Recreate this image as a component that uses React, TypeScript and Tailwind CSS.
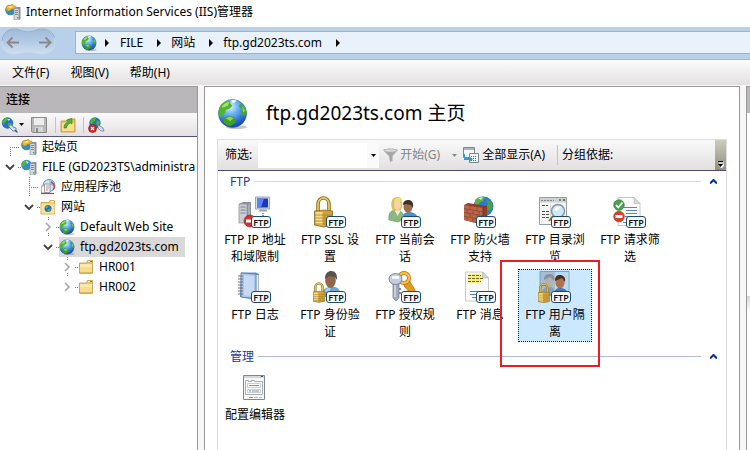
import React, { useId, useState } from "react";
import type { ReactNode } from "react";

/* ---------- shared drawings ---------- */

function Globe({ className = "size-4" }: { className?: string }) {
  const id = useId();
  return (
    <svg viewBox="0 0 32 32" className={`shrink-0 ${className}`} aria-hidden="true">
      <defs>
        <radialGradient id={id} cx="0.42" cy="0.25" r="0.8">
          <stop offset="0" stopColor="#e2f6ff" />
          <stop offset="0.3" stopColor="#78bdf5" />
          <stop offset="0.7" stopColor="#2a6fd6" />
          <stop offset="1" stopColor="#123c98" />
        </radialGradient>
      </defs>
      <ellipse cx="20" cy="30" rx="11" ry="2" fill="#000" opacity="0.22" />
      <circle cx="16" cy="16" r="14.5" fill={`url(#${id})`} stroke="#2a5dac" strokeWidth="0.6" />
      <path d="M3 9C6 4 10 3 13 3l1 3 2 2-3 3-4 1-1 4-3 2-1 3-2-3c-1-3 0-6 1-9z" fill="#4fb52c" />
      <path d="M5 9c2-3 5-5 8-5l-2 4-5 2z" fill="#a5e266" />
      <path d="M24 6c3 1 6 5 6.400 9l-2 4-3-2-1-3 1-3-3-2z" fill="#46a82b" />
      <path d="M26 8l3 5-2 2z" fill="#8fd955" />
      <path d="M7 21l5-3 5 2 3 4-2 2-4 3-4-1-3-3z" fill="#3fa028" />
      <path d="M9 21l4-2 4 2-3 3z" fill="#8ad94e" />
      <path d="M15 2h5l-2 3h-3z" fill="#e9fbff" />
    </svg>
  );
}

function ServerIcon({ sun = false }: { sun?: boolean }) {
  return (
    <svg viewBox="0 0 16 16" className="size-4 shrink-0" aria-hidden="true">
      <circle cx="5.500" cy="6" r="5.300" fill="#2f86dc" />
      <path d="M1 5c1-3 3-4 5-4l1 2-2 2-1 2-2 1z" fill="#55b336" />
      <path d="M4 8l3 0 0 3-3-1z" fill="#47a62f" />
      <path d="M5 2l3 1-2 2z" fill="#c5ecff" />
      {sun && (
        <>
          <path d="M1 3l2-2 2 1 2-2 2 2 2 0-1 3-3 0-3 2-2-1z" fill="#f4b42b" stroke="#cf8b12" strokeWidth="0.5" />
          <path d="M3 3l3-1 2 1-3 1z" fill="#fff0a0" />
        </>
      )}
      <path d="M9 4.500l2-1.500h4.500v12l-1.500 1H9z" fill="#8c949b" />
      <path d="M9 4.500h5V16H9z" fill="#d5dadd" stroke="#7d868d" strokeWidth="0.6" />
      <path d="M10 6.500h3M10 8.500h3M10 10.500h3" stroke="#66717a" strokeWidth="0.8" />
      <path d="M12 13h1.500v1.500H12z" fill="#38c02e" />
    </svg>
  );
}

function PoolIcon() {
  return (
    <svg viewBox="0 0 16 16" className="size-4 shrink-0" aria-hidden="true">
      <circle cx="9" cy="6.500" r="6" fill="#cfe6f6" stroke="#5b93c4" />
      <path d="M9 1c3 0 5 2 5.500 5l-2.500 1-2-2z" fill="#8fc4e8" />
      <path d="M11 3a5 5 0 0 1 2 8" fill="none" stroke="#d0463c" strokeWidth="1.500" />
      <path d="M1.500 7h5v7h-5z" fill="#fff" stroke="#8a98a8" strokeWidth="0.8" />
      <path d="M4.500 5h5.500v8.500H4.500z" fill="#f8fafc" stroke="#7b8999" strokeWidth="0.8" />
      <path d="M6 7h3M6 9h3M6 11h2" stroke="#e0635a" strokeWidth="0.8" />
      <path d="M1 14.500h13" stroke="#c23a30" strokeWidth="1.200" />
    </svg>
  );
}

function SitesIcon() {
  return (
    <svg viewBox="0 0 16 16" className="size-4 shrink-0" aria-hidden="true">
      <path d="M1 3.500h8l1-2h4.500V15H1z" fill="#f4cf72" stroke="#c79a3c" strokeWidth="0.8" />
      <path d="M1.500 5h13v9.500h-13z" fill="#fbe29c" />
      <path d="M11 2.500h3" stroke="#fff" />
      <circle cx="8" cy="9.500" r="3.500" fill="#2a70c2" />
      <path d="M5 8.500l2-2 1.500 1-1.500 2z M8 10l2.500 0-1 2.500-2 0z" fill="#52b83a" />
    </svg>
  );
}

function FolderIcon() {
  return (
    <svg viewBox="0 0 16 16" className="size-4 shrink-0" aria-hidden="true">
      <path d="M1.500 4h7l1-2.500h5V14h-13z" fill="#ecc164" stroke="#c39a48" strokeWidth="0.8" />
      <path d="M10 2.500h4" stroke="#fff" />
      <path d="M12 2.500h2" stroke="#3c86d8" />
      <path d="M2 5h12v8.500H2z" fill="#f9dc8f" />
      <path d="M2 5h12v3H2z" fill="#fde9ae" />
      <path d="M1.500 14.200h13" stroke="#b78b36" strokeWidth="0.8" />
    </svg>
  );
}

/* ---------- feature icons (32 x 32) ---------- */

function Svg32({ children }: { children: ReactNode }) {
  return (
    <svg viewBox="0 0 32 32" className="size-8" aria-hidden="true">
      {children}
    </svg>
  );
}

function Padlock({ x = 0, y = 0, s = 1 }: { x?: number; y?: number; s?: number }) {
  return (
    <g transform={`translate(${x} ${y}) scale(${s})`}>
      <path d="M5 16V8a5.500 6 0 0 1 11 0v8" fill="none" stroke="#8d6b1c" strokeWidth="3.600" />
      <path d="M5 16V8a5.500 6 0 0 1 11 0v8" fill="none" stroke="#ebc75f" strokeWidth="1.800" />
      <path d="M1.500 15l10-1 8 1v14l-9 2-9-2z" fill="#d0a03a" stroke="#8d6b1c" strokeWidth="0.8" />
      <path d="M2.500 16h7v13.500l-7-1.500z" fill="#f5dc8b" />
      <path d="M2 19h17M2 22h17M2 25h17M2 28h17" stroke="#a87d22" strokeWidth="0.8" />
    </g>
  );
}

const IpIcon = () => (
  <Svg32>
    <path d="M1 8l4-2h8v19l-3 2H1z" fill="#8b9299" />
    <path d="M1 8h8v19H1z" fill="#c9ced3" stroke="#858d95" strokeWidth="0.7" />
    <path d="M2.500 11h5M2.500 14h5M2.500 17h5" stroke="#7b848d" />
    <path d="M11 8v16" stroke="#c0c6cc" />
    <path d="M17.500 1h14v12h-14z" fill="#d8dde6" stroke="#8b95a5" strokeWidth="0.8" />
    <path d="M19 2.500h11v9H19z" fill="#1b35c4" />
    <path d="M19 2.500h7l-3 9h-4z" fill="#5c83ee" />
    <path d="M22 13.500h6l2 2H20z" fill="#9aa3b0" />
    <path d="M25 17v4" stroke="#222" strokeDasharray="1 1" />
    <circle cx="12" cy="25" r="6" fill="#d3312b" stroke="#941a17" strokeWidth="0.6" />
    <path d="M8 23.500h8v3H8z" fill="#fff" />
  </Svg32>
);

const SslIcon = () => (
  <Svg32>
    <Padlock />
  </Svg32>
);

const SessionsIcon = () => (
  <Svg32>
    <path d="M14 24c0-6 3-8 7-8s9 2 9 8z" fill="#4b8fd0" />
    <ellipse cx="20" cy="11" rx="4.500" ry="5.500" fill="#a06a46" />
    <path d="M15 9c0-4 3-5 5.500-5S26 6 25 12l-2-3-5-1z" fill="#3a2f2a" />
    <path d="M1 24c-1-7 2-10 7-10s8 3 8 9l-6 3z" fill="#8ab885" stroke="#5f9460" strokeWidth="0.6" />
    <path d="M4 13C2 6 4 1 9 1s6 4 5 10l-2 4H6z" fill="#dcc158" />
    <ellipse cx="9.500" cy="9" rx="3.400" ry="5" fill="#f5d2ac" />
    <path d="M6 7c0-4 2-5 4-5s4 1 4 4l-4-1z" fill="#efdc84" />
    <path d="M7 15l2.500 5 3-5-2-1z" fill="#fbe6cf" />
  </Svg32>
);

const FirewallIcon = () => (
  <Svg32>
    <circle cx="20.500" cy="10.500" r="10" fill="#2f78d8" />
    <path d="M12 4c3-4 8-4 10-3l-2 4-3 1-2 4-3-1z" fill="#57b63a" />
    <path d="M23 3l5 3 2 6-4 3-3-4 2-3z" fill="#49a632" />
    <path d="M15 2l5-1-2 3z" fill="#c6ecff" />
    <path d="M1 9l4-2 19 3v17l-4 2-19-5z" fill="#8e3f2c" />
    <path d="M1 9l19 3v16L1 24z" fill="#bd6549" />
    <path d="M1 12.700l19 3.200M1 16.500l19 3.200M1 20.200l19 3.800M7 10v4M14 11v4M4 13.500v3.500M10 14.500v3.500M16 15.500v3.500M7 18v3M14 19v4M4 21v3M10 22v4" stroke="#8b4634" strokeWidth="0.8" fill="none" />
    <path d="M20 12l4-2M20 12v16" stroke="#6a2c1c" strokeWidth="0.8" />
  </Svg32>
);

const BrowseIcon = () => (
  <Svg32>
    <path d="M1.500 1.500h27v27h-27z" fill="#f6f6f4" stroke="#999d9f" />
    <path d="M2 2h26v4.500H2z" fill="#cfd2d2" />
    <path d="M3 4.500h13" stroke="#7c8284" strokeDasharray="2 1" />
    <path d="M21 3h2v2h-2z" fill="#5f9f3f" />
    <path d="M25 3h2v2h-2z" fill="#6b7173" />
    <path d="M4 9.500h6M4 15.500h7M4 18.500h7M4 21.500h7" stroke="#4b5052" strokeDasharray="3 1" />
    <path d="M12.500 8v17" stroke="#d5d8d9" />
    <circle cx="20" cy="15" r="6.500" fill="#cfe8f8" stroke="#8798a5" strokeWidth="1.500" />
    <path d="M16 14c1-3 4-4 7-3l-4 4z" fill="#fff" />
    <path d="M15 20l-4 5" stroke="#a0703e" strokeWidth="2" />
  </Svg32>
);

const RequestIcon = () => (
  <Svg32>
    <path d="M5 1.500h16l6 6v22H5z" fill="#fbfbfb" stroke="#b4b8bc" strokeWidth="0.8" />
    <path d="M21 1.500v6h6z" fill="#d6dadd" stroke="#b4b8bc" strokeWidth="0.6" />
    <path d="M11 11.500h13M13 14.500h11M13 17.500h11M12 20.500h12M10 26.500h4" stroke="#5489c4" />
    <circle cx="6" cy="9" r="5.300" fill="#45a14a" stroke="#277330" strokeWidth="0.6" />
    <path d="M3 9l2.300 2.500L9.500 6.500" fill="none" stroke="#fff" strokeWidth="1.800" />
    <circle cx="6" cy="20.500" r="5.300" fill="#dc4128" stroke="#9c2413" strokeWidth="0.6" />
    <path d="M2.500 19h7v3h-7z" fill="#fff" />
  </Svg32>
);

const LogIcon = () => (
  <Svg32>
    <path d="M3 1.500h15l3 1.500v24l-3 2-16-3z" fill="#6a8cba" />
    <path d="M3 2l15 1v25L3 26z" fill="#a9c6e8" stroke="#5577a6" strokeWidth="0.8" />
    <path d="M6 4l10 1v21L6 24z" fill="#c6dbf3" />
    <path d="M18.500 4l2 0v23l-2 1z" fill="#e7edf4" />
    <path d="M0 5h5M0 8h5M0 11h5M0 14h5M0 17h5M0 20h5M0 23h5" stroke="#66717e" strokeWidth="1.200" />
  </Svg32>
);

const AuthIcon = () => (
  <Svg32>
    <path d="M8 26c0-7 4-9 8-10h6c4 1 6 4 6 10z" fill="#6fa5d6" />
    <path d="M12 20c1-3 4-4 6-4l-2 6z" fill="#a9cdec" />
    <ellipse cx="17.500" cy="9.500" rx="5.300" ry="7.500" fill="#926649" />
    <path d="M12 8c0-6 3-8 6.500-8s6 3 5.500 9l-2-3-6-1z" fill="#55544f" />
    <Padlock x={-1} y={11} s={0.66} />
  </Svg32>
);

const KeysIcon = () => (
  <Svg32>
    <path d="M17 12l4-3 6 10 0 5-4-1-7-8z" fill="#e39a1c" stroke="#a76a0d" strokeWidth="0.7" />
    <circle cx="16" cy="7" r="5" fill="none" stroke="#b9770f" strokeWidth="4" />
    <circle cx="16" cy="7" r="5" fill="none" stroke="#f5be49" strokeWidth="2.400" />
    <path d="M5 12h6v15l-3 3-3-3z" fill="#a4adbf" stroke="#6b7488" strokeWidth="0.7" />
    <path d="M11 17h2v2h-2zM11 21h2v2h-2z" fill="#7a849a" />
    <ellipse cx="7.500" cy="8" rx="6.500" ry="5.500" fill="#c6cddb" stroke="#6b7488" strokeWidth="0.8" />
    <path d="M4 6.500h7" stroke="#fff" strokeWidth="2.500" />
    <path d="M7 14v12" stroke="#eef1f6" />
  </Svg32>
);

const MessageIcon = () => (
  <Svg32>
    <path d="M2.500 1h17l6 6v23h-23z" fill="#fafafa" stroke="#c3c6c9" strokeWidth="0.9" />
    <path d="M19.500 1v6h6z" fill="#d3d7da" stroke="#a5a9ad" strokeWidth="0.6" />
    <path d="M5 3h13v9H5z" fill="#f6ec86" />
    <path d="M5 4.500h13M5 7.500h16M5 10.500h13" stroke="#6b662c" strokeDasharray="3 1" />
    <path d="M7 20.500h8M7 23.500h6M9 26.500h4" stroke="#4f80c0" />
  </Svg32>
);

const IsolationIcon = () => (
  <Svg32>
    <path d="M2 0.500h29v24H2z" fill="#a7bed2" stroke="#6d93b7" strokeWidth="0.8" />
    <path d="M17 1h13.500v23H17z" fill="#b7dbf6" />
    <path d="M4 24c0-7 3-8 7-8s6 1 6 8z" fill="#86a3bb" />
    <ellipse cx="11" cy="10.500" rx="4.500" ry="6" fill="#b3b2ad" />
    <path d="M6 9c0-4 2-6 5.500-6S17 5 16 10l-4-4z" fill="#87929b" />
    <path d="M16 24c0-6 3-7 6-7s8 1 8 7z" fill="#3f78b4" />
    <ellipse cx="22" cy="11.500" rx="4.500" ry="6" fill="#b0724b" />
    <path d="M17 10c0-5 2-6 5-6s6 2 5 7l-3-4z" fill="#4b2f22" />
    <Padlock x={-1} y={12} s={0.64} />
  </Svg32>
);

const ConfigIcon = () => (
  <Svg32>
    <path d="M5.500 4.500h21v24h-21z" fill="#f4f6f7" stroke="#7e868c" />
    <path d="M6 5h20v2H6z" fill="#d3d7da" />
    <path d="M23 5h2v1h-2z" fill="#38516b" />
    <path d="M7.500 23.500v-14h3v1h3v-1h3v1h8v13z" fill="#fff" stroke="#a8adb2" />
    <path d="M9.500 12.500h13v4h-13zM9.500 18.500h13v3h-13z" fill="#fff" stroke="#c9cdd0" />
    <path d="M11 14.500h10M14 20h7" stroke="#8a9095" />
    <path d="M11 20h2M11 26.500h4" stroke="#22b4ee" strokeWidth="1.200" />
    <path d="M16 26.500h4M21 26.500h3" stroke="#b5babd" />
  </Svg32>
);

/* ---------- connections tree ---------- */

type Twist = "none" | "open" | "closed";

function Lead({ twist, up, down }: { twist: Twist; up: boolean; down: boolean }) {
  return (
    <svg viewBox="0 0 21 20" className="h-5 w-[21px] shrink-0" fill="none" aria-hidden="true">
      <g stroke="#808080" strokeDasharray="1 1">
        {up && <path d={twist === "none" ? "M10.500 0v10" : "M10.500 0v4"} />}
        {down && <path d={twist === "none" ? "M10.500 10v10" : "M10.500 16v4"} />}
        <path d={twist === "none" ? "M10 10.500h10" : "M18 10.500h3"} />
      </g>
      {twist === "open" && <path d="M6 8l4 4 4-4" stroke="#404040" strokeWidth="1.800" />}
      {twist === "closed" && <path d="M8 6l4 4-4 4" stroke="#a6a6a6" strokeWidth="1.600" />}
    </svg>
  );
}

interface Node {
  label: string;
  indent: string;
  twist: Twist;
  up: boolean;
  down: boolean;
  icon: ReactNode;
}

const nodes: Node[] = [
  { label: "起始页", indent: "pl-0", twist: "none", up: false, down: true, icon: <ServerIcon sun /> },
  { label: "FILE (GD2023TS\\administra", indent: "pl-0", twist: "open", up: false, down: false, icon: <ServerIcon /> },
  { label: "应用程序池", indent: "pl-[19px]", twist: "none", up: true, down: true, icon: <PoolIcon /> },
  { label: "网站", indent: "pl-[19px]", twist: "open", up: false, down: false, icon: <SitesIcon /> },
  { label: "Default Web Site", indent: "pl-[38px]", twist: "closed", up: true, down: true, icon: <Globe /> },
  { label: "ftp.gd2023ts.com", indent: "pl-[38px]", twist: "open", up: false, down: false, icon: <Globe /> },
  { label: "HR001", indent: "pl-[57px]", twist: "closed", up: true, down: true, icon: <FolderIcon /> },
  { label: "HR002", indent: "pl-[57px]", twist: "closed", up: false, down: false, icon: <FolderIcon /> },
];

function Connections() {
  const [current, setCurrent] = useState("ftp.gd2023ts.com");
  return (
    <aside className="flex w-[198px] shrink-0 flex-col overflow-hidden border-t border-r border-[#989898] bg-white">
      <h2 className="flex h-[26px] shrink-0 items-center bg-[#bab7ba] px-1.5 font-medium">连接</h2>
      <div className="flex h-6 shrink-0 items-center border-b border-[#56527a] bg-gradient-to-b from-[#fbfafa] to-[#e3e0e2]">
        <button type="button" aria-label="连接" className="flex items-center gap-px pl-px">
          <svg viewBox="0 0 17 16" className="h-4 w-[17px]" aria-hidden="true">
            <circle cx="6.500" cy="6" r="5.700" fill="#286fc6" />
            <path d="M1 5c1-3 3-5 6-4l-1 3-2 1-1 3z M7 6l4 0-1 4-3-1z" fill="#4eb234" />
            <path d="M6 2l3 0-1 2z" fill="#d0f0ff" />
            <path d="M8 8l3 0 1 2 3 1 0 3-3 0-4-4z" fill="#d3dde9" stroke="#5c7796" strokeWidth="0.8" />
            <path d="M14 13l2.500 2.500" stroke="#40566f" strokeWidth="1.200" />
          </svg>
          <svg viewBox="0 0 5 3" className="h-[3px] w-[5px]" aria-hidden="true"><path d="M0 0h5L2.500 3z" /></svg>
        </button>
        <button type="button" aria-label="保存" disabled className="ml-1.5">
          <svg viewBox="0 0 18 16" className="h-4 w-[18px]" aria-hidden="true">
            <path d="M1.500.500h15v15h-14l-1-1z" fill="#b7b7b7" stroke="#8b8b8b" />
            <path d="M4 1h10v7H4z" fill="#ededed" />
            <path d="M5 10h8v5H5z" fill="#d6d6d6" />
            <path d="M6 11h2v4H6z" fill="#8a8a8a" />
          </svg>
        </button>
        <span className="mr-1 ml-[7px] h-4 w-px bg-[#c5c3b2]" />
        <button type="button" aria-label="向上">
          <svg viewBox="0 0 16 16" className="size-4" aria-hidden="true">
            <path d="M1 4h7l1-2h6v13H1z" fill="#eec466" stroke="#bb8f37" strokeWidth="0.8" />
            <path d="M2 6h12v8H2z" fill="#fbdf91" />
            <path d="M4 11c0-4 2-5 4-6L6.500 3 12 1.500 12 7l-1.500-1C8 7 7 8 6.500 11z" fill="#51b82d" stroke="#2d7d17" strokeWidth="0.6" />
          </svg>
        </button>
        <span className="mr-1 ml-[7px] h-4 w-px bg-[#c5c3b2]" />
        <button type="button" aria-label="断开连接">
          <svg viewBox="0 0 17 16" className="h-4 w-[17px]" aria-hidden="true">
            <circle cx="7" cy="6" r="5.700" fill="#286fc6" />
            <path d="M2 5c1-3 3-5 6-4l-1 3-2 1-1 3z M9 3l3 2-1 4-3-2z" fill="#4eb234" />
            <path d="M10 8l2 1 3 2 1 3-3 0-3-3z" fill="#d3dde9" stroke="#5c7796" strokeWidth="0.7" />
            <circle cx="4.500" cy="11.500" r="4" fill="#d2282a" stroke="#8f1416" strokeWidth="0.6" />
            <path d="M3 10l3 3M6 10l-3 3" stroke="#fff" strokeWidth="1.300" />
          </svg>
        </button>
      </div>
      <ul role="tree" className="flex-1">
        {nodes.map((n) => (
          <li key={n.label} role="treeitem" aria-selected={n.label === current}>
            <button
              type="button"
              onClick={() => setCurrent(n.label)}
              className={`flex h-5 w-full items-center text-left whitespace-nowrap ${n.indent}`}
            >
              <Lead twist={n.twist} up={n.up} down={n.down} />
              <span className={`flex h-5 items-center gap-[5px] pr-1.5 ${n.label === current ? "bg-[#d9d9d9]" : ""}`}>
                {n.icon}
                <span>{n.label}</span>
              </span>
            </button>
          </li>
        ))}
      </ul>
    </aside>
  );
}

/* ---------- feature view ---------- */

interface Feature {
  label: string;
  icon: ReactNode;
  ftp: boolean;
}

const ftpFeatures: Feature[] = [
  { label: "FTP IP 地址和域限制", icon: <IpIcon />, ftp: true },
  { label: "FTP SSL 设置", icon: <SslIcon />, ftp: true },
  { label: "FTP 当前会话", icon: <SessionsIcon />, ftp: true },
  { label: "FTP 防火墙支持", icon: <FirewallIcon />, ftp: true },
  { label: "FTP 目录浏览", icon: <BrowseIcon />, ftp: true },
  { label: "FTP 请求筛选", icon: <RequestIcon />, ftp: true },
  { label: "FTP 日志", icon: <LogIcon />, ftp: true },
  { label: "FTP 身份验证", icon: <AuthIcon />, ftp: true },
  { label: "FTP 授权规则", icon: <KeysIcon />, ftp: true },
  { label: "FTP 消息", icon: <MessageIcon />, ftp: true },
  { label: "FTP 用户隔离", icon: <IsolationIcon />, ftp: true },
];

const adminFeatures: Feature[] = [{ label: "配置编辑器", icon: <ConfigIcon />, ftp: false }];

const highlighted = "FTP 用户隔离";

function FeatureCell({ feature }: { feature: Feature }) {
  const active = feature.label === highlighted;
  return (
    <li className="relative h-[75px] w-[75px] pr-px pb-0.5">
      <button
        type="button"
        className={`flex h-full w-full flex-col items-center border px-[3px] pt-px leading-[17px] ${
          active ? "border-dotted border-[#222] bg-[#cce8ff]" : "border-transparent"
        }`}
      >
        <span className="relative mr-0.5 mb-[3px] block size-8 shrink-0">
          {feature.icon}
          {feature.ftp && (
            <span className="absolute top-5 left-[13px] flex h-3 w-5 items-center justify-center rounded-[3px] border border-[#1f4b6b] bg-[#f6fbfe] text-[9px] leading-none font-semibold text-[#111]">
              FTP
            </span>
          )}
        </span>
        <span className="w-full text-center">{feature.label}</span>
      </button>
      {active && (
        <span className="pointer-events-none absolute -top-[9px] -left-[18px] z-10 h-[107px] w-[100px] border-2 border-[#ed1c24]" />
      )}
    </li>
  );
}

function Group({ title, line, items }: { title: string; line: string; items: Feature[] }) {
  return (
    <section>
      <h3 className="flex h-[23px] items-center pr-[9px] pb-0.5 pl-3 text-[#1a3a9c]">
        <span>{title}</span>
        <span className={`mx-1 h-px flex-1 ${line}`} />
        <button type="button" aria-label={`折叠 ${title}`} className="ml-[5px]">
          <svg viewBox="0 0 7 5" className="h-[5px] w-[7px]" fill="none" stroke="#002f9c" strokeWidth="2" aria-hidden="true">
            <path d="M0 4.500l3.500-3.500L7 4.500" />
          </svg>
        </button>
      </h3>
      <ul className="flex flex-wrap">
        {items.map((f) => (
          <FeatureCell key={f.label} feature={f} />
        ))}
      </ul>
    </section>
  );
}

function FilterBar() {
  return (
    <div className="flex h-[31px] shrink-0 items-center border-b border-[#4d4a72] bg-gradient-to-b from-[#fafafa] to-[#e2dfe1] pl-[7px]">
      <label htmlFor="filter">筛选:</label>
      <div className="ml-1.5 flex h-[25px] w-[121px] bg-white">
        <input id="filter" type="text" className="w-0 flex-1 px-1 outline-none" />
        <button type="button" aria-label="筛选历史" className="flex w-3 items-center justify-center bg-[#fafafa]">
          <svg viewBox="0 0 5 3" className="h-[3px] w-[5px]" aria-hidden="true"><path d="M0 0h5L2.500 3z" /></svg>
        </button>
      </div>
      <button type="button" className="ml-1 flex items-center gap-0.5 text-[#838383]">
        <svg viewBox="0 0 15 14" className="h-[14px] w-[15px]" aria-hidden="true">
          <path d="M0 2c4-2 11-2 15 0L9.500 8v5L7 14 6 8z" fill="#a7a7a7" />
          <ellipse cx="7.500" cy="2.500" rx="6" ry="1.300" fill="#d7d7d7" />
        </svg>
        开始(G)
      </button>
      <button type="button" aria-label="开始选项" className="ml-3">
        <svg viewBox="0 0 5 3" className="h-[3px] w-[5px]" fill="#8a8a8a" aria-hidden="true"><path d="M0 0h5L2.500 3z" /></svg>
      </button>
      <button type="button" className="ml-1.5 flex items-center gap-[3px]">
        <svg viewBox="0 0 16 16" className="size-4" aria-hidden="true">
          <path d="M.500.500h11v10H.500z" fill="#f6f9fb" stroke="#7a8793" />
          <path d="M1 1h10v2H1z" fill="#a9b5c0" />
          <path d="M6.500 6.500h9v9h-9z" fill="#f3f6fa" stroke="#7a8793" />
          <path d="M8 9.500h6M8 11.500h6M8 13.500h6" stroke="#4a6aa5" strokeDasharray="1 1" />
          <path d="M2 7v4h4V9l4 3.500L6 15v-2H1V7z" fill="#2f9bd8" />
        </svg>
        全部显示(A)
      </button>
      <span className="mr-1 ml-3 h-5 w-px bg-[#c5c3b2]" />
      <span>分组依据:</span>
      <button type="button" aria-label="工具栏选项" className="ml-auto flex h-full w-[11px] items-end justify-center bg-gradient-to-b from-[#cdcbbd] to-[#94917c] pb-0.5">
        <svg viewBox="0 0 6 7" className="h-[7px] w-1.5" aria-hidden="true">
          <path d="M1 2h5M1 4l2.500 3L6 4z" stroke="#fff" fill="#fff" />
          <path d="M0 .500h5" stroke="#000" />
          <path d="M0 3h5L2.500 6z" />
        </svg>
      </button>
    </div>
  );
}

function Crumb({ children }: { children: ReactNode }) {
  return (
    <>
      <li className="flex items-center">{children}</li>
      <li aria-hidden="true" className="mr-2.5 ml-3.5">
        <svg viewBox="0 0 4 8" className="h-2 w-1"><path d="M0 0l4 4-4 4z" /></svg>
      </li>
    </>
  );
}

function AddressBar() {
  const id = useId();
  return (
    <nav className="flex h-[33px] shrink-0 border-b border-[#9fb9d8] bg-[#b9d0eb]">
      <div className="w-[75px] shrink-0">
        <svg viewBox="0 0 75 32" className="h-8 w-[75px]" aria-hidden="true">
          <defs>
            <linearGradient id={id} x1="0" y1="0" x2="0" y2="1">
              <stop offset="0" stopColor="#9fbad8" />
              <stop offset="0.5" stopColor="#b2cae5" />
              <stop offset="1" stopColor="#cfdff1" />
            </linearGradient>
          </defs>
          <path d="M2 15C2 7 7 2 14 2c6 0 8 3 14 3s8-3 14-3c7 0 13 5 13 13s-6 12-13 12c-6 0-8-2-14-2s-8 2-14 2C7 27 2 23 2 15z" fill={`url(#${id})`} stroke="#c8daee" />
          <path d="M2 14C3 6 8 2 14 2c6 0 8 3 14 3s8-3 14-3c6 0 11 3 12.500 9" fill="none" stroke="#8ea9c9" />
          <g fill="none" stroke="#8b8987" strokeWidth="1.800">
            <path d="M19 15.500H8M12.500 10.500l-5 5 5 5" />
            <path d="M39 15.500h11M45.500 10.500l5 5-5 5" />
          </g>
        </svg>
      </div>
      <ol className="mt-1 flex h-[23px] flex-1 items-center border border-r-0 border-[#98b3d3] bg-[#e9f1fa] pl-[5px]">
        <li className="flex items-center">
          <Globe />
          <svg viewBox="0 0 4 8" className="mr-[11px] ml-2 h-2 w-1" aria-hidden="true"><path d="M0 0l4 4-4 4z" /></svg>
        </li>
        <Crumb><a href="#file">FILE</a></Crumb>
        <Crumb><a href="#sites">网站</a></Crumb>
        <Crumb><a href="#site">ftp.gd2023ts.com</a></Crumb>
      </ol>
    </nav>
  );
}

export default function App() {
  return (
    <div className="flex h-screen flex-col overflow-hidden bg-[#f7f7f7] font-['Noto_Sans','Noto_Sans_CJK_SC',sans-serif] text-[12px] leading-4 text-black">
      <header className="flex h-[27px] shrink-0 items-center gap-[5px] bg-white pb-1 pl-[5px]">
        <ServerIcon sun />
        <h1>Internet Information Services (IIS)管理器</h1>
      </header>
      <AddressBar />
      <div role="menubar" className="flex h-[25px] shrink-0 items-center gap-[21px] bg-gradient-to-b from-[#fcfcfc] to-[#e3e0e2] px-3">
        <button type="button" role="menuitem">文件(F)</button>
        <button type="button" role="menuitem">视图(V)</button>
        <button type="button" role="menuitem">帮助(H)</button>
      </div>
      <div className="flex min-h-0 flex-1 pt-px">
        <Connections />
        <main className="mr-1.5 ml-1.5 flex min-w-0 flex-1 flex-col border border-b-0 border-[#989898] bg-white px-3">
          <div className="flex h-[52px] shrink-0 items-center gap-[18px]">
            <Globe className="size-[31px]" />
            <h2 className="text-[19px] leading-6">ftp.gd2023ts.com 主页</h2>
          </div>
          <div className="flex min-h-0 flex-1 flex-col border border-b-0 border-[#dedede]">
            <FilterBar />
            <div className="flex flex-col gap-0.5">
              <Group title="FTP" line="bg-[#d3dbee]" items={ftpFeatures} />
              <Group title="管理" line="bg-[#aebcdc]" items={adminFeatures} />
            </div>
          </div>
        </main>
        <aside aria-label="操作" className="flex w-1 shrink-0 flex-col border-t border-l border-[#989898] bg-white">
          <div className="h-[26px] bg-[#bab7ba]" />
          <div className="mt-[183px] h-4 bg-gradient-to-b from-[#d6d6d6] to-white" />
        </aside>
      </div>
    </div>
  );
}
